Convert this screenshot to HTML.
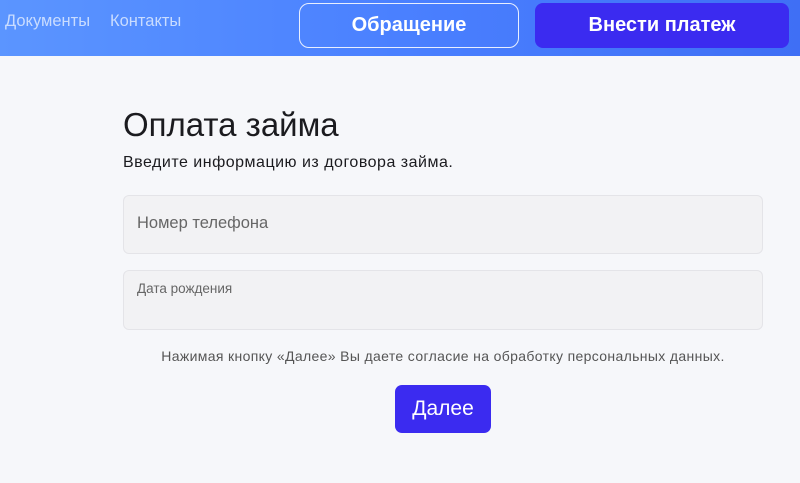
<!DOCTYPE html>
<html><head><meta charset="utf-8"><style>
*{box-sizing:border-box;margin:0;padding:0}
body{width:800px;height:483px;overflow:hidden;background:#f6f7fa;font-family:"Liberation Sans",sans-serif;position:relative}
.hdr{position:absolute;left:0;top:0;width:800px;height:56px;background:linear-gradient(90deg,#5b95ff,#4a80ff 50%,#3f6ff5)}
.nav{position:absolute;top:12px;font-size:16.5px;color:#c9dcff}
.b1{position:absolute;left:299px;top:3px;width:220px;height:45px;border:1.5px solid #e8efff;border-radius:10px;color:#fff;font-weight:bold;font-size:20px;text-align:center;line-height:42px}
.b2{position:absolute;left:535px;top:3px;width:254px;height:45px;background:#3b2bf0;border-radius:8px;color:#fff;font-weight:bold;font-size:20px;text-align:center;line-height:45px}
h1{position:absolute;left:123px;top:106px;font-size:33px;font-weight:normal;color:#1b1b1f}
.sub{position:absolute;left:123px;top:154px;font-size:16px;letter-spacing:0.5px;color:#1b1b1f}
.f{position:absolute;left:123px;width:640px;background:#f2f2f4;border:1px solid #e4e4e8;border-radius:6px;color:#666}
.note{position:absolute;left:0;width:886px;text-align:center;top:348px;font-size:14px;letter-spacing:0.35px;color:#555}
.go{position:absolute;left:395px;top:385px;width:96px;height:48px;background:#3b2bf0;border-radius:7px;color:#fff;font-size:21px;text-align:center;line-height:48px}
</style></head><body>
<div class="hdr"></div>
<div class="nav" style="left:5px">Документы</div>
<div class="nav" style="left:110px">Контакты</div>
<div class="b1">Обращение</div>
<div class="b2">Внести платеж</div>
<h1>Оплата займа</h1>
<div class="sub">Введите информацию из договора займа.</div>
<div class="f" style="top:195px;height:59px;padding:18px 0 0 13px;font-size:16.5px">Номер телефона</div>
<div class="f" style="top:270px;height:60px;padding:10px 0 0 13px;font-size:13.5px">Дата рождения</div>
<div class="note">Нажимая кнопку «Далее» Вы даете согласие на обработку персональных данных.</div>
<div class="go">Далее</div>
</body></html>
